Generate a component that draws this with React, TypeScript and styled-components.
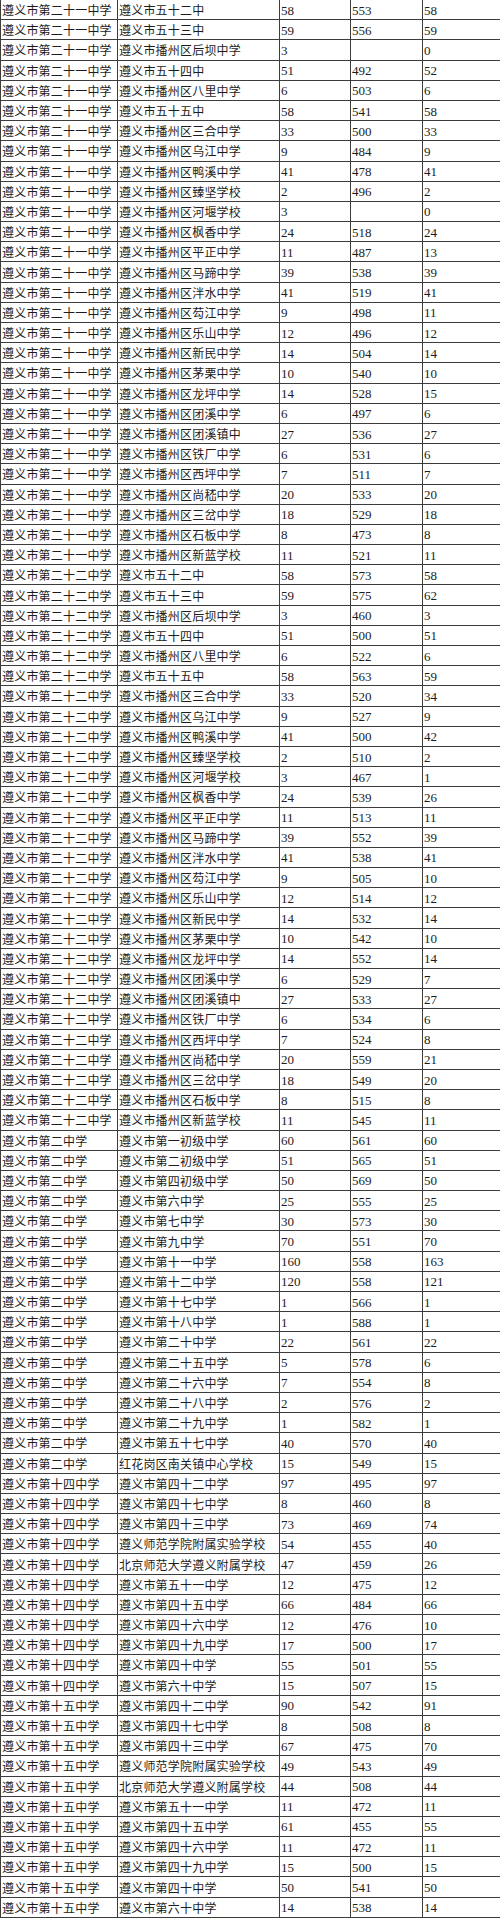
import styled, { createGlobalStyle } from 'styled-components';

const GlobalStyle = createGlobalStyle`
  html, body {
    margin: 0;
    padding: 0;
    background: #fff;
  }
`;

/* score sheet grid */
const Sheet = styled.div`
  display: grid;
  grid-template-columns: 117px 162px 71px 72px 1fr;
  grid-auto-rows: 20.19px;
  width: 500px;
  box-sizing: border-box;
  border-left: 1px solid #3c3c3c;
  background: #fff;
  color: #1c1c1c;
  overflow: hidden;
`;

const Row = styled.div`
  display: contents;
`;

const Cell = styled.div<{ $num?: boolean }>`
  display: flex;
  align-items: center;
  box-sizing: border-box;
  border-right: 1px solid #3c3c3c;
  border-bottom: 1px solid #3c3c3c;
  padding: 1px 0 0 1px;
  white-space: nowrap;
  overflow: hidden;
  font-family: ${(p) =>
    p.$num
      ? '"Liberation Serif", "Noto Sans CJK SC", serif'
      : '"Noto Sans CJK SC", "Noto Sans", sans-serif'};
  font-size: ${(p) => (p.$num ? '13px' : '12px')};
  font-weight: 400;
  letter-spacing: ${(p) => (p.$num ? '0' : '0.2px')};
  line-height: 1;

  &:last-child {
    border-right: none;
  }
`;

type Line = [string, string, string, string, string];

const S21 = '遵义市第二十一中学';
const S22 = '遵义市第二十二中学';
const S2 = '遵义市第二中学';
const S14 = '遵义市第十四中学';
const S15 = '遵义市第十五中学';
const bz = (s: string) => '遵义市播州区' + s;
const zy = (s: string) => '遵义市' + s;

const rows: Line[] = [
  [S21, zy('五十二中'), '58', '553', '58'],
  [S21, zy('五十三中'), '59', '556', '59'],
  [S21, bz('后坝中学'), '3', '', '0'],
  [S21, zy('五十四中'), '51', '492', '52'],
  [S21, bz('八里中学'), '6', '503', '6'],
  [S21, zy('五十五中'), '58', '541', '58'],
  [S21, bz('三合中学'), '33', '500', '33'],
  [S21, bz('乌江中学'), '9', '484', '9'],
  [S21, bz('鸭溪中学'), '41', '478', '41'],
  [S21, bz('臻坚学校'), '2', '496', '2'],
  [S21, bz('河堰学校'), '3', '', '0'],
  [S21, bz('枫香中学'), '24', '518', '24'],
  [S21, bz('平正中学'), '11', '487', '13'],
  [S21, bz('马蹄中学'), '39', '538', '39'],
  [S21, bz('泮水中学'), '41', '519', '41'],
  [S21, bz('芶江中学'), '9', '498', '11'],
  [S21, bz('乐山中学'), '12', '496', '12'],
  [S21, bz('新民中学'), '14', '504', '14'],
  [S21, bz('茅栗中学'), '10', '540', '10'],
  [S21, bz('龙坪中学'), '14', '528', '15'],
  [S21, bz('团溪中学'), '6', '497', '6'],
  [S21, bz('团溪镇中'), '27', '536', '27'],
  [S21, bz('铁厂中学'), '6', '531', '6'],
  [S21, bz('西坪中学'), '7', '511', '7'],
  [S21, bz('尚嵇中学'), '20', '533', '20'],
  [S21, bz('三岔中学'), '18', '529', '18'],
  [S21, bz('石板中学'), '8', '473', '8'],
  [S21, bz('新蓝学校'), '11', '521', '11'],
  [S22, zy('五十二中'), '58', '573', '58'],
  [S22, zy('五十三中'), '59', '575', '62'],
  [S22, bz('后坝中学'), '3', '460', '3'],
  [S22, zy('五十四中'), '51', '500', '51'],
  [S22, bz('八里中学'), '6', '522', '6'],
  [S22, zy('五十五中'), '58', '563', '59'],
  [S22, bz('三合中学'), '33', '520', '34'],
  [S22, bz('乌江中学'), '9', '527', '9'],
  [S22, bz('鸭溪中学'), '41', '500', '42'],
  [S22, bz('臻坚学校'), '2', '510', '2'],
  [S22, bz('河堰学校'), '3', '467', '1'],
  [S22, bz('枫香中学'), '24', '539', '26'],
  [S22, bz('平正中学'), '11', '513', '11'],
  [S22, bz('马蹄中学'), '39', '552', '39'],
  [S22, bz('泮水中学'), '41', '538', '41'],
  [S22, bz('芶江中学'), '9', '505', '10'],
  [S22, bz('乐山中学'), '12', '514', '12'],
  [S22, bz('新民中学'), '14', '532', '14'],
  [S22, bz('茅栗中学'), '10', '542', '10'],
  [S22, bz('龙坪中学'), '14', '552', '14'],
  [S22, bz('团溪中学'), '6', '529', '7'],
  [S22, bz('团溪镇中'), '27', '533', '27'],
  [S22, bz('铁厂中学'), '6', '534', '6'],
  [S22, bz('西坪中学'), '7', '524', '8'],
  [S22, bz('尚嵇中学'), '20', '559', '21'],
  [S22, bz('三岔中学'), '18', '549', '20'],
  [S22, bz('石板中学'), '8', '515', '8'],
  [S22, bz('新蓝学校'), '11', '545', '11'],
  [S2, zy('第一初级中学'), '60', '561', '60'],
  [S2, zy('第二初级中学'), '51', '565', '51'],
  [S2, zy('第四初级中学'), '50', '569', '50'],
  [S2, zy('第六中学'), '25', '555', '25'],
  [S2, zy('第七中学'), '30', '573', '30'],
  [S2, zy('第九中学'), '70', '551', '70'],
  [S2, zy('第十一中学'), '160', '558', '163'],
  [S2, zy('第十二中学'), '120', '558', '121'],
  [S2, zy('第十七中学'), '1', '566', '1'],
  [S2, zy('第十八中学'), '1', '588', '1'],
  [S2, zy('第二十中学'), '22', '561', '22'],
  [S2, zy('第二十五中学'), '5', '578', '6'],
  [S2, zy('第二十六中学'), '7', '554', '8'],
  [S2, zy('第二十八中学'), '2', '576', '2'],
  [S2, zy('第二十九中学'), '1', '582', '1'],
  [S2, zy('第五十七中学'), '40', '570', '40'],
  [S2, '红花岗区南关镇中心学校', '15', '549', '15'],
  [S14, zy('第四十二中学'), '97', '495', '97'],
  [S14, zy('第四十七中学'), '8', '460', '8'],
  [S14, zy('第四十三中学'), '73', '469', '74'],
  [S14, '遵义师范学院附属实验学校', '54', '455', '40'],
  [S14, '北京师范大学遵义附属学校', '47', '459', '26'],
  [S14, zy('第五十一中学'), '12', '475', '12'],
  [S14, zy('第四十五中学'), '66', '484', '66'],
  [S14, zy('第四十六中学'), '12', '476', '10'],
  [S14, zy('第四十九中学'), '17', '500', '17'],
  [S14, zy('第四十中学'), '55', '501', '55'],
  [S14, zy('第六十中学'), '15', '507', '15'],
  [S15, zy('第四十二中学'), '90', '542', '91'],
  [S15, zy('第四十七中学'), '8', '508', '8'],
  [S15, zy('第四十三中学'), '67', '475', '70'],
  [S15, '遵义师范学院附属实验学校', '49', '543', '49'],
  [S15, '北京师范大学遵义附属学校', '44', '508', '44'],
  [S15, zy('第五十一中学'), '11', '472', '11'],
  [S15, zy('第四十五中学'), '61', '455', '55'],
  [S15, zy('第四十六中学'), '11', '472', '11'],
  [S15, zy('第四十九中学'), '15', '500', '15'],
  [S15, zy('第四十中学'), '50', '541', '50'],
  [S15, zy('第六十中学'), '14', '538', '14'],
];

export default function App() {
  return (
    <>
      <GlobalStyle />
      <Sheet>
        {rows.map((r, i) => (
          <Row key={i}>
            <Cell>{r[0]}</Cell>
            <Cell>{r[1]}</Cell>
            <Cell $num>{r[2]}</Cell>
            <Cell $num>{r[3]}</Cell>
            <Cell $num>{r[4]}</Cell>
          </Row>
        ))}
      </Sheet>
    </>
  );
}
